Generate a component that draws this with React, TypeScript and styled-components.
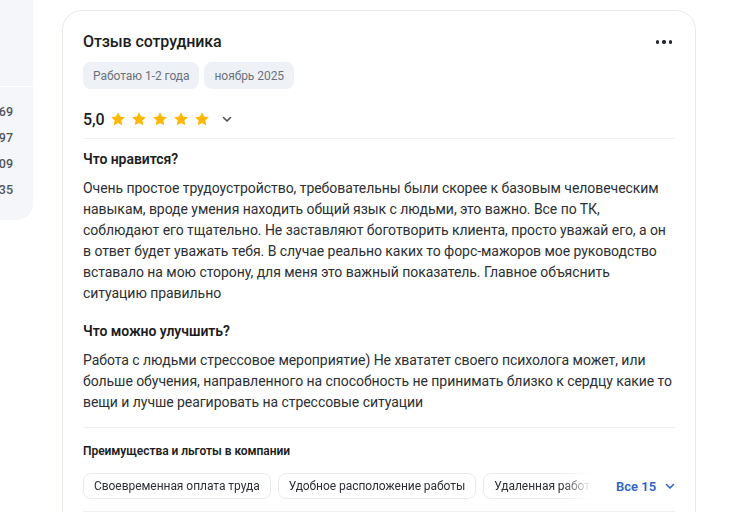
import React from "react";
import styled, { createGlobalStyle } from "styled-components";

const Global = createGlobalStyle`
  html, body { margin: 0; padding: 0; background: #ffffff; }
  body { font-family: Roboto, "Noto Sans", Arial, sans-serif; color: #1f2226; overflow: hidden; }
  * { box-sizing: border-box; }
`;

const Page = styled.div`
  display: flex;
  align-items: flex-start;
  gap: 29px;
  width: 754px;
  height: 512px;
  overflow: hidden;
`;

const SidePanel = styled.aside`
  width: 33px;
  flex: none;
  height: 220px;
  background: #f4f6fa;
  border-bottom-right-radius: 16px;
  overflow: hidden;
  display: flex;
  flex-direction: column;
  padding-top: 86px;
`;

const SideDivider = styled.div`
  width: 100%;
  height: 1px;
  background: #ffffff;
  margin-bottom: 12px;
`;

const SideRow = styled.div`
  display: flex;
  justify-content: flex-end;
  padding-right: 20px;
  font-size: 12.5px;
  font-weight: 500;
  color: #50555c;
  line-height: 26px;
  white-space: nowrap;
`;

const Card = styled.article`
  width: 634px;
  flex: none;
  margin-top: 10px;
  border: 1px solid #e6e9ee;
  border-radius: 20px;
  padding: 19px 20px 20px 20px;
  background: #fff;
  letter-spacing: -0.05px;
`;

const Header = styled.div`
  display: flex;
  align-items: center;
  justify-content: space-between;
  height: 24px;
`;

const Title = styled.h2`
  margin: 0;
  font-size: 16px;
  font-weight: 500;
  color: #1b1d21;
  line-height: 24px;
  letter-spacing: -0.1px;
`;

const MoreButton = styled.button`
  border: none;
  background: none;
  padding: 0;
  margin-right: 3px;
  display: flex;
  gap: 3px;
  cursor: pointer;
`;

const Dot = styled.span`
  width: 3.4px;
  height: 3.4px;
  border-radius: 50%;
  background: #22262b;
`;

const Tags = styled.div`
  display: flex;
  gap: 5px;
  margin-top: 8px;
`;

const Tag = styled.span`
  height: 27px;
  padding: 0 10px;
  border-radius: 8px;
  background: #eef1f6;
  color: #6c727b;
  font-size: 12px;
  display: inline-flex;
  align-items: center;
`;

const RatingRow = styled.div`
  display: flex;
  align-items: center;
  height: 28px;
  margin-top: 16px;
`;

const Score = styled.span`
  font-size: 16px;
  font-weight: 500;
  color: #1b1d21;
  margin-right: 5px;
`;

const Stars = styled.div`
  display: flex;
  gap: 5px;
`;

const Chevron = styled.span<{ $color?: string; $ml?: number }>`
  display: inline-flex;
  margin-left: ${(p) => p.$ml ?? 10}px;
  color: ${(p) => p.$color ?? "#4b5057"};
`;

const Divider = styled.hr<{ $top?: number }>`
  border: none;
  height: 1px;
  background: #eef0f3;
  margin: ${(p) => p.$top ?? 0}px 0 0 0;
`;

const Section = styled.section<{ $top: number }>`
  margin-top: ${(p) => p.$top}px;
`;

const SectionTitle = styled.h3`
  margin: 0;
  font-size: 14px;
  font-weight: 600;
  line-height: 21px;
  color: #1b1d21;
`;

const Body = styled.p`
  margin: 8px 0 0 0;
  font-size: 14px;
  line-height: 21px;
  color: #2b2f34;
`;

const BenefitsTitle = styled.h4`
  margin: 0;
  font-size: 12px;
  font-weight: 600;
  line-height: 20px;
  color: #1b1d21;
`;

const BenefitsRow = styled.div`
  display: flex;
  align-items: center;
  margin-top: 12px;
  height: 26px;
`;

const ChipTrack = styled.div`
  display: flex;
  gap: 7px;
  width: 518px;
  flex: none;
  overflow: hidden;
  -webkit-mask-image: linear-gradient(to right, #000 480px, transparent 508px);
  mask-image: linear-gradient(to right, #000 480px, transparent 508px);
`;

const Chip = styled.span`
  flex: none;
  height: 26px;
  padding: 0 10px;
  border: 1px solid #e8ebf0;
  border-radius: 8px;
  font-size: 12px;
  color: #2b2f34;
  display: inline-flex;
  align-items: center;
  white-space: nowrap;
`;

const AllButton = styled.button`
  flex: none;
  border: none;
  background: none;
  padding: 0;
  margin-left: 15px;
  display: inline-flex;
  align-items: center;
  white-space: nowrap;
  color: #2f63c7;
  font-family: inherit;
  font-size: 13px;
  font-weight: 600;
  cursor: pointer;
`;

const Star = () => (
  <svg width="16" height="16" viewBox="0 0 24 24">
    <path
      d="M12 1.8l3.1 6.6 7.2.9-5.3 5 1.4 7.1L12 17.9l-6.4 3.5 1.4-7.1-5.3-5 7.2-.9z"
      fill="#ffb700"
    />
  </svg>
);

const Down = ({ size = 12 }: { size?: number }) => (
  <svg width={size} height={size} viewBox="0 0 12 12" fill="none">
    <path d="M2.5 4.5L6 8l3.5-3.5" stroke="currentColor" strokeWidth="1.6" strokeLinecap="round" strokeLinejoin="round" />
  </svg>
);

export default function App() {
  return (
    <>
      <Global />
      <Page>
        <SidePanel>
          <SideDivider />
          <SideRow><span>1 269</span></SideRow>
          <SideRow><span>2 197</span></SideRow>
          <SideRow><span>1 609</span></SideRow>
          <SideRow><span>3 235</span></SideRow>
        </SidePanel>
        <Card>
          <Header>
            <Title>Отзыв сотрудника</Title>
            <MoreButton aria-label="Ещё">
              <Dot />
              <Dot />
              <Dot />
            </MoreButton>
          </Header>
          <Tags>
            <Tag>Работаю 1-2 года</Tag>
            <Tag>ноябрь 2025</Tag>
          </Tags>
          <RatingRow>
            <Score>5,0</Score>
            <Stars>
              <Star />
              <Star />
              <Star />
              <Star />
              <Star />
            </Stars>
            <Chevron $ml={11}>
              <Down />
            </Chevron>
          </RatingRow>
          <Divider $top={5} />
          <Section $top={10}>
            <SectionTitle>Что нравится?</SectionTitle>
            <Body>
              Очень простое трудоустройство, требовательны были скорее к базовым человеческим
              навыкам, вроде умения находить общий язык с людьми, это важно. Все по ТК,
              соблюдают его тщательно. Не заставляют боготворить клиента, просто уважай его, а он
              в ответ будет уважать тебя. В случае реально каких то форс-мажоров мое руководство
              вставало на мою сторону, для меня это важный показатель. Главное объяснить
              ситуацию правильно
            </Body>
          </Section>
          <Section $top={17}>
            <SectionTitle>Что можно улучшить?</SectionTitle>
            <Body>
              Работа с людьми стрессовое мероприятие) Не хвататет своего психолога может, или
              больше обучения, направленного на способность не принимать близко к сердцу какие то
              вещи и лучше реагировать на стрессовые ситуации
            </Body>
          </Section>
          <Divider $top={14} />
          <Section $top={13}>
            <BenefitsTitle>Преимущества и льготы в компании</BenefitsTitle>
            <BenefitsRow>
              <ChipTrack>
                <Chip>Своевременная оплата труда</Chip>
                <Chip>Удобное расположение работы</Chip>
                <Chip>Удаленная работа</Chip>
                <Chip>Гибкий график</Chip>
              </ChipTrack>
              <AllButton>
                Все 15
                <Chevron $color="#2f63c7" $ml={8}>
                  <Down />
                </Chevron>
              </AllButton>
            </BenefitsRow>
            <Divider $top={12} />
          </Section>
        </Card>
      </Page>
    </>
  );
}
